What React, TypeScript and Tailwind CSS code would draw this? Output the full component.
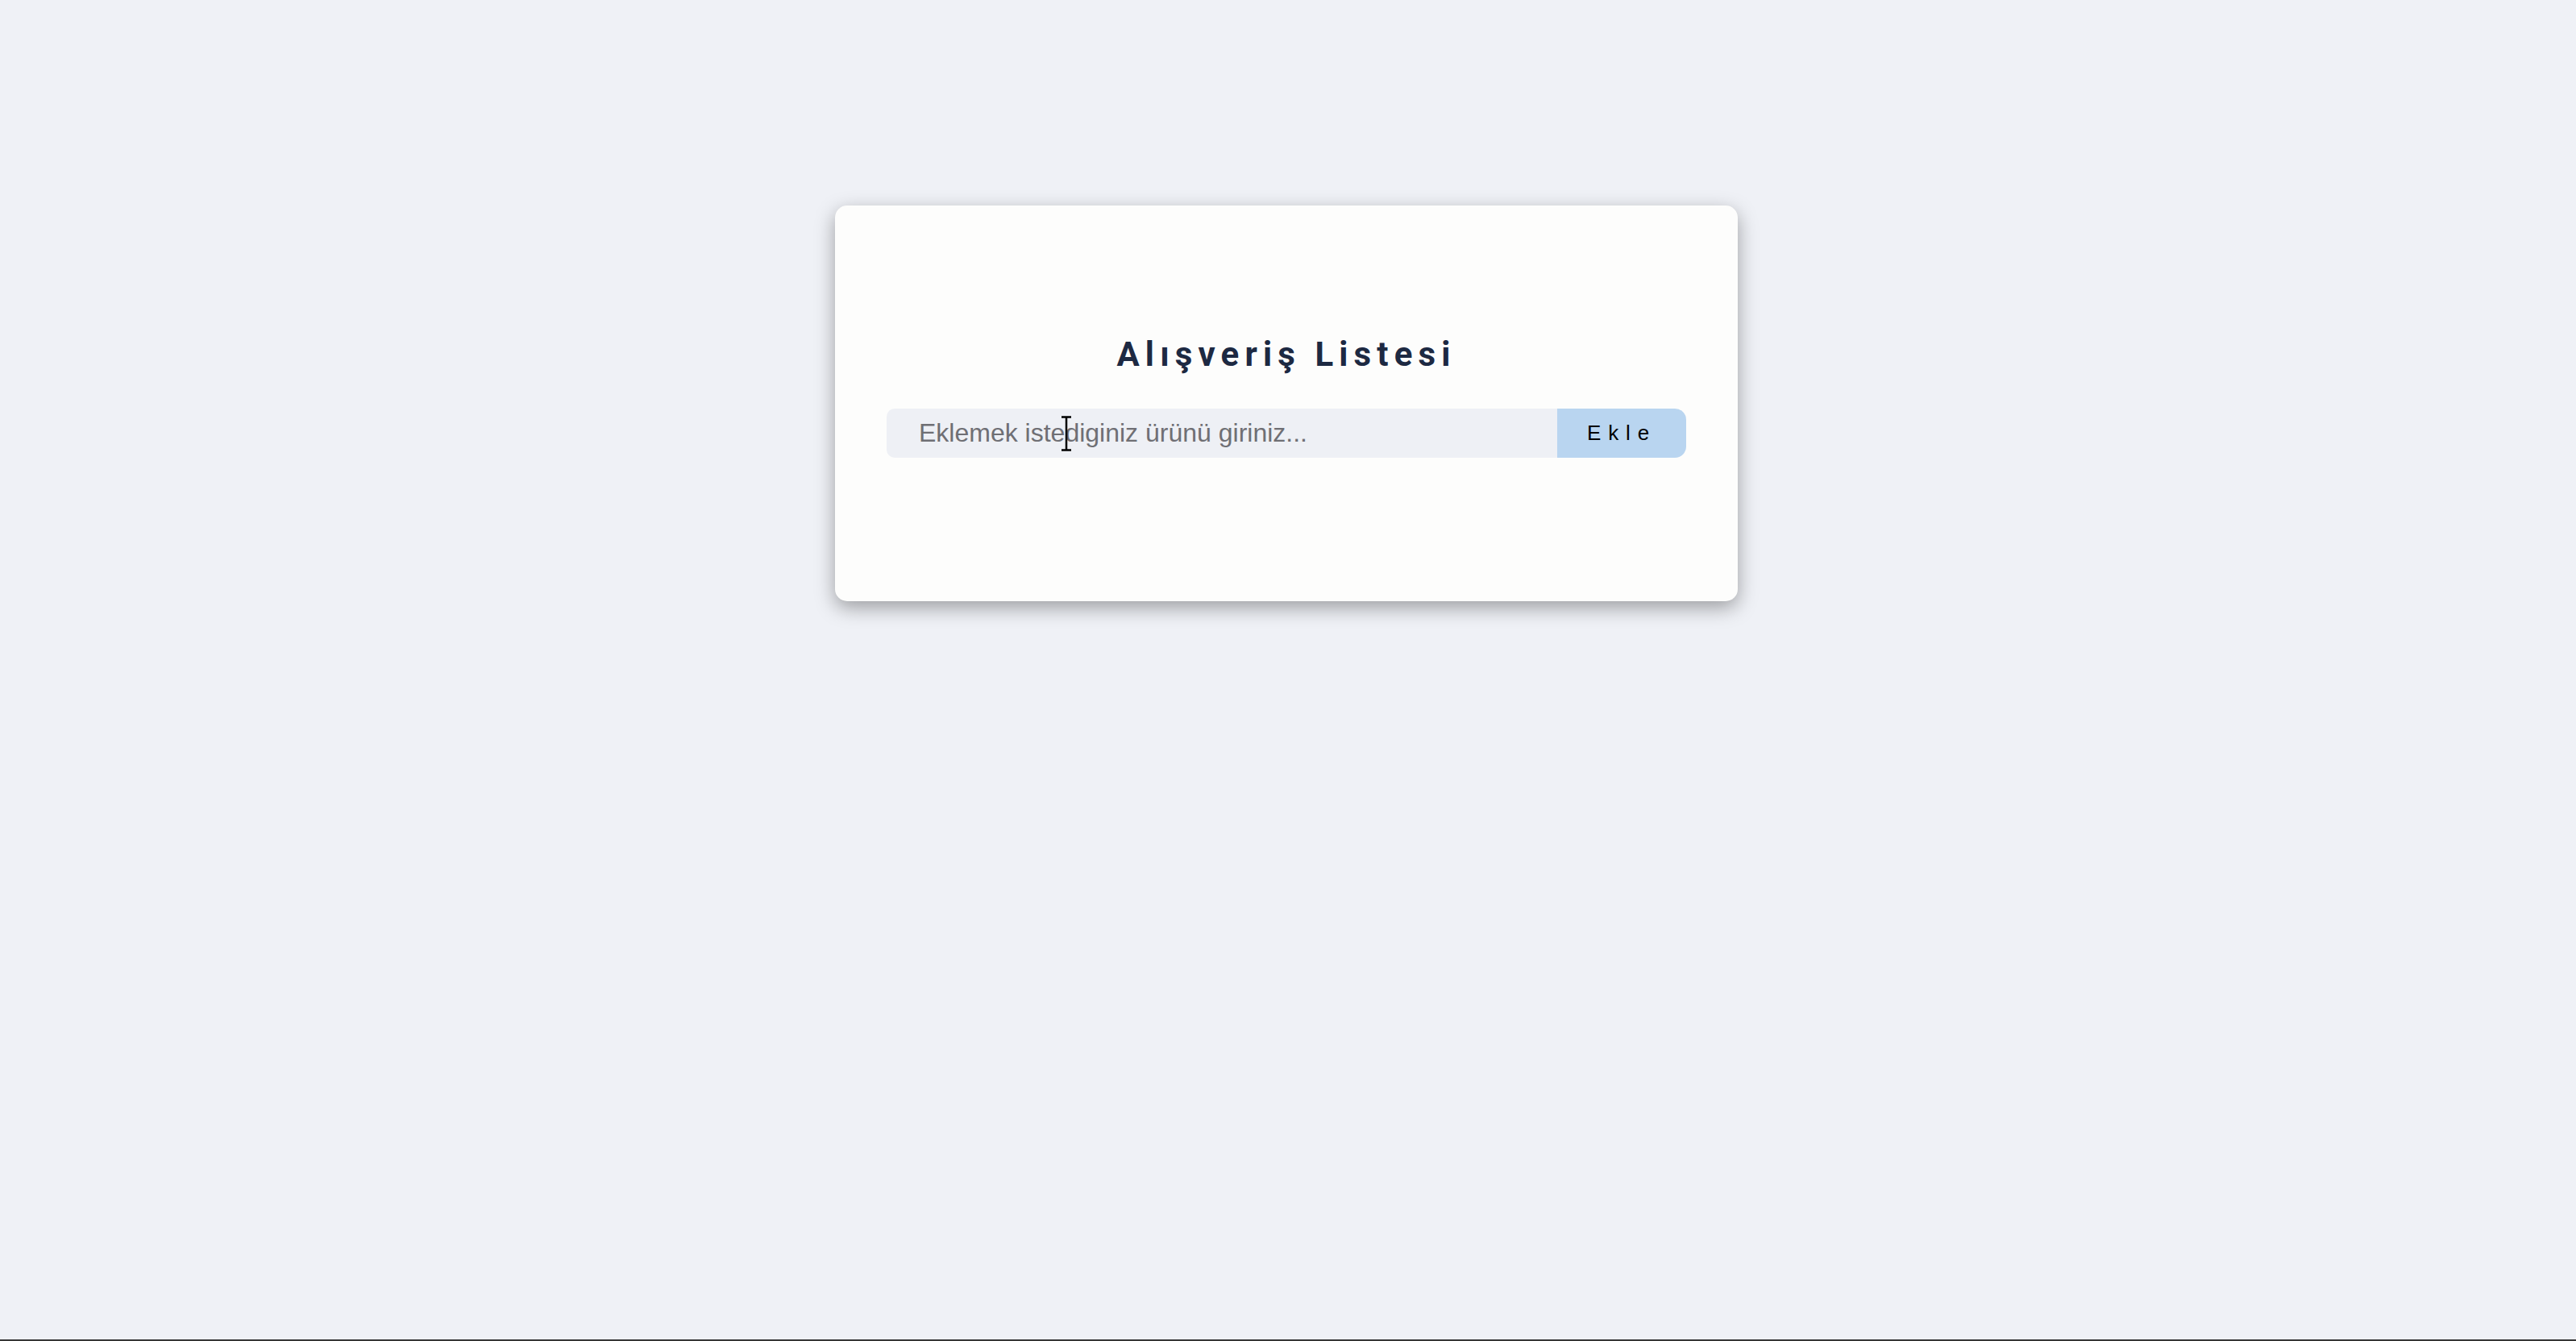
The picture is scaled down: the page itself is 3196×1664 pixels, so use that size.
import React from "react";

export default function App() {
  return (
    <div className="flex min-h-screen flex-col bg-[#eff1f6]">
      <div className="flex-1 pt-[255px] pr-[4px]">
        <div className="mx-auto flex w-[1120px] flex-col items-center rounded-[15px] bg-[#fdfdfc] px-[64px] pt-[160px] pb-[178px] shadow-[0_8px_24px_rgba(0,0,0,0.35)]">
          <h1 className="h-[50px] text-center font-['Roboto',sans-serif] text-[42px] font-bold leading-[50px] tracking-[0.17em] text-[#1d2942]">
            Alışveriş Listesi
          </h1>
          <div className="relative mt-[42px] flex h-[61px] w-full">
            <input
              type="text"
              placeholder="Eklemek istediginiz ürünü giriniz..."
              className="h-full flex-1 rounded-l-[10px] bg-[#eef0f5] pl-[40px] font-['Liberation_Sans',Arial,sans-serif] text-[32px] text-[#333] outline-none placeholder:text-[#6f6f74]"
            />
            <button className="h-full w-[160px] rounded-r-[14px] bg-[#b9d5f0] font-['Liberation_Sans',Arial,sans-serif] text-[26px] tracking-[0.34em] text-black">
              Ekle
            </button>
            <svg
              className="pointer-events-none absolute left-[216px] top-[9px]"
              width="14"
              height="44"
              viewBox="0 0 14 44"
            >
              <path d="M1 1.5h12M1 42.5h12M7 1.5v41" stroke="#000" strokeWidth="2.5" fill="none" />
            </svg>
          </div>
        </div>
      </div>
      <div className="h-[2px] bg-[#363636]" />
    </div>
  );
}
